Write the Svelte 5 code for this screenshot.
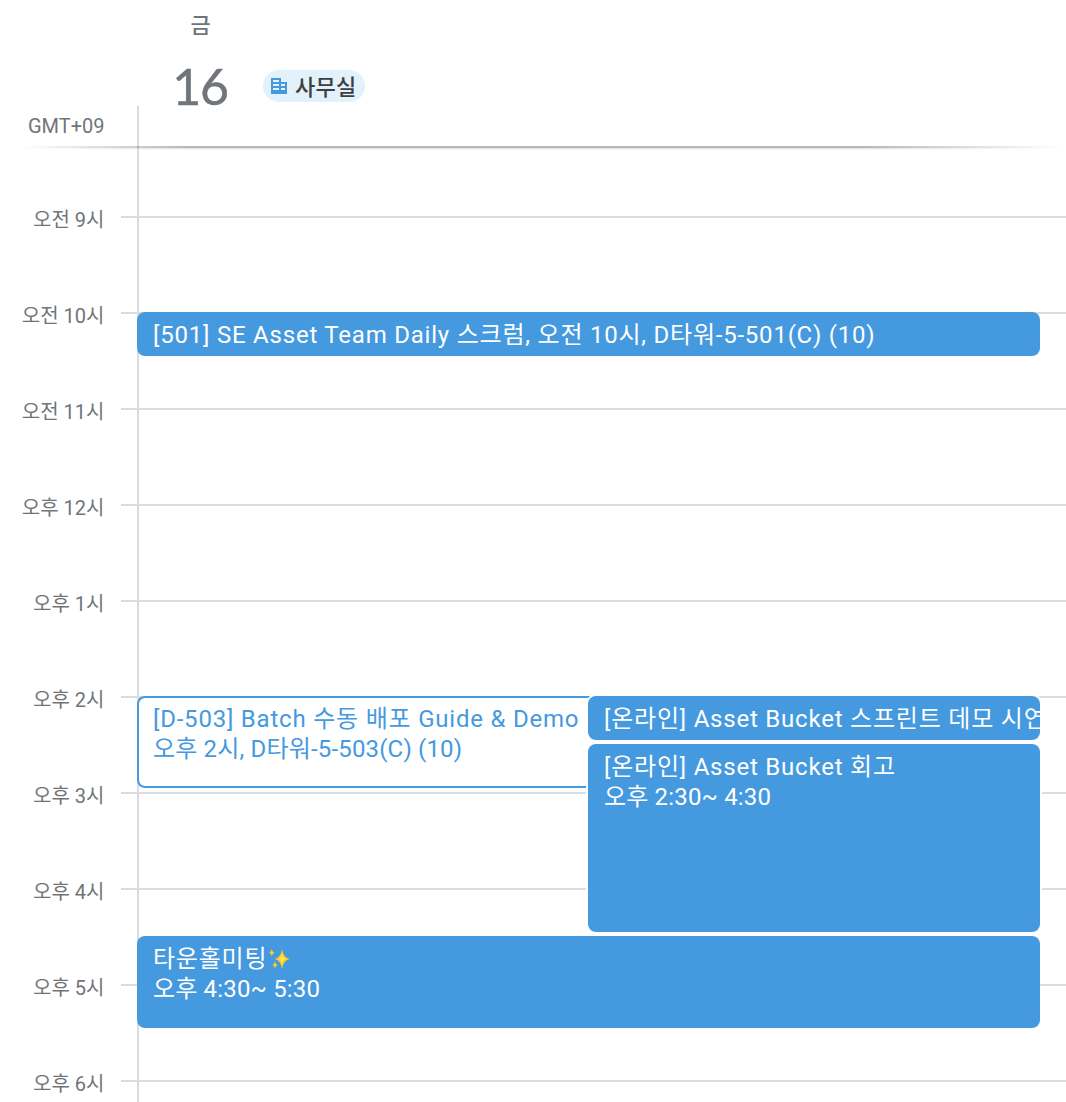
<script>
  const hours = ['오전 9시', '오전 10시', '오전 11시', '오후 12시', '오후 1시', '오후 2시', '오후 3시', '오후 4시', '오후 5시', '오후 6시'];
  const events = [
    { title: '[501] SE Asset Team Daily 스크럼', detail: ', 오전 10시, D타워-5-501(C) (10)', cls: 'daily inline' },
    { title: '[D-503] Batch 수동 배포 Guide & Demo', detail: '오후 2시, D타워-5-503(C) (10)', cls: 'demo' },
    { title: '[온라인] Asset Bucket 스프린트 데모 시연', detail: '', cls: 'sprint inline' },
    { title: '[온라인] Asset Bucket 회고', detail: '오후 2:30~ 4:30', cls: 'retro' },
    { title: '타운홀미팅', sparkle: true, detail: '오후 4:30~ 5:30', cls: 'townhall' }
  ];
</script>

<div class="calendar">
  <header>
    <div class="zone">GMT+09</div>
    <div class="day">
      <div class="weekday">금</div>
      <div class="date-row">
        <div class="date">16</div>
        <div class="chip">
          <svg viewBox="0 0 16 16" width="16" height="16">
            <path fill="#4599df" fill-rule="evenodd" d="M0 0H10V4H16V16H0ZM2 2H8V4H2ZM2 6H8V8H2ZM2 10H8V12H2ZM10 6H14V8H10ZM10 10H14V12H10Z" />
          </svg>
          <span>사무실</span>
        </div>
      </div>
    </div>
    <div class="stub"></div>
  </header>
  <div class="divider"><div class="shade"></div></div>
  <main>
    <div class="hours">
      {#each hours as hour}
        <div class="hour"><span>{hour}</span><i></i></div>
      {/each}
    </div>
    <div class="axis"></div>
    <div class="events">
      {#each events as e}
        <article class={e.cls}>
          <span class="title">{e.title}{#if e.sparkle}<svg class="sparkle" viewBox="0 0 22 22" width="22" height="22"><g fill="#ffc928"><path d="M13 1Q14.2 9.8 21 11Q14.2 12.2 13 21Q11.800 12.200 5.500 11Q11.800 9.800 13 1Z" /><path d="M2.800 .8Q3.300 4.200 6 4.700Q3.300 5.200 2.800 8.800Q2.300 5.200 .1 4.700Q2.300 4.200 2.800 .8Z" /><path d="M6 13Q6.500 16.400 9 17Q6.500 17.600 6 21Q5.500 17.600 3 17Q5.500 16.400 6 13Z" /></g><path fill="#ffe34d" d="M13 5Q13.800 10.400 18 11Q13.800 11.600 13 17Q12.200 11.600 9 11Q12.200 10.400 13 5Z" /></svg>{/if}</span>{#if e.detail}<span class="detail">{e.detail}</span>{/if}
        </article>
      {/each}
    </div>
  </main>
</div>

<style>
  :global(body) { background: #fff; }
  .calendar {
    width: 1066px; height: 1102px; overflow: hidden; background: #fff;
    display: grid; grid-template-rows: 146px 4px 952px;
    font-family: Roboto, 'Noto Sans CJK KR', sans-serif; color: #70757a;
  }
  header { display: grid; grid-template-columns: 137px 1fr; grid-template-rows: 106px 40px; }
  .zone { grid-area: 2 / 1; padding: 8px 32.5px 0 0; text-align: right; font-size: 20px; line-height: 24px; }
  .day { grid-area: 1 / 2 / 3 / 3; }
  .weekday { width: 127px; padding-top: 10px; text-align: center; font-size: 22px; line-height: 32px; font-weight: 500; }
  .date-row { display: flex; margin-top: 16px; align-items: center; height: 56px; }
  .date { width: 126px; text-align: center; font: 50px/58px Lato, sans-serif; letter-spacing: -1.2px; -webkit-text-stroke: .5px; }
  .chip {
    display: flex; align-items: center; gap: 8px; box-sizing: border-box; width: 102px; height: 32px;
    padding-left: 8px; border-radius: 16px; background: #e3f1fb; color: #3c4043;
    font-size: 22px; font-weight: 500; line-height: 32px; white-space: nowrap;
  }
  .chip span { padding-top: 4px; letter-spacing: .2px; }
  .stub { grid-area: 2 / 2; width: 2px; background: #dadce0; }
  .divider { background: linear-gradient(#dadce0, #dadce0) 137px 0 / 2px 4px no-repeat; }
  .shade {
    height: 4px;
    background: linear-gradient(#00000048 0 2px, #0000001c 2px 3px, #00000008 3px 4px);
    mask-image: linear-gradient(90deg, transparent 22px, #000 190px, #000 860px, transparent 1062px);
  }
  main { display: grid; grid-template-columns: 137px 903px 26px; grid-template-rows: 952px; }
  .hours { grid-area: 1 / 1 / 2 / 4; padding-top: 66px; }
  .hour { display: grid; grid-template-columns: 104.5px 1fr; column-gap: 16.5px; height: 96px; }
  .hour span { text-align: right; font-size: 20px; line-height: 24px; margin-top: -8px; white-space: nowrap; }
  .hour i { height: 2px; background: #dadce0; }
  .axis { grid-area: 1 / 2; width: 2px; background: #dadce0; }
  .events {
    grid-area: 1 / 2; display: grid; grid-template-columns: 451px 452px;
    grid-template-rows: repeat(20, 48px); padding-top: 18px; z-index: 1;
  }
  article {
    box-sizing: border-box; margin-bottom: 4px; padding: 8px 0 0 16px; overflow: hidden;
    border-radius: 8px; background: #4599df; color: #fff; font-size: 24px; line-height: 30px; white-space: nowrap;
  }
  .title, .detail { display: block; }
  .title { letter-spacing: .79px; }
  .detail { letter-spacing: .17px; }
  .inline span { display: inline; }
  .daily { grid-area: 4 / 1 / 5 / 3; }
  .daily .detail { letter-spacing: .77px; }
  .demo {
    grid-area: 12 / 1 / 14 / 2; margin-right: -6px; background: #fff; color: #4599df;
    border: 2px solid; border-right: 0; border-radius: 8px 0 0 8px; padding: 6px 0 0 14px;
  }
  .sprint { grid-area: 12 / 2 / 13 / 3; box-shadow: 0 0 0 2px #fff; }
  .retro { grid-area: 13 / 2 / 17 / 3; box-shadow: 0 0 0 2px #fff; }
  .townhall { grid-area: 17 / 1 / 19 / 3; }
  .sparkle { vertical-align: -3px; margin-left: 2px; }
</style>
